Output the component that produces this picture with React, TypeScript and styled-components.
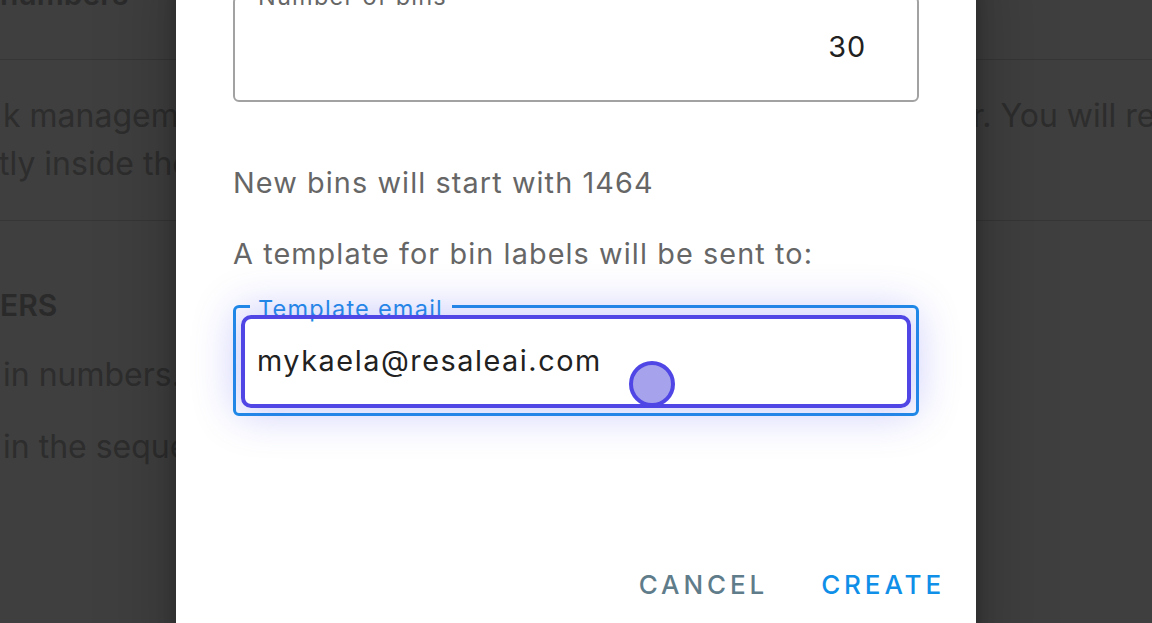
import { PropsWithChildren } from "react";
import styled, { createGlobalStyle } from "styled-components";

const GlobalStyle = createGlobalStyle`
  html, body {
    margin: 0;
    padding: 0;
    overflow: hidden;
  }
  body {
    font-family: Inter, "Noto Sans", sans-serif;
  }
`;

const Screen = styled.div`
  position: relative;
  width: 1152px;
  height: 623px;
  overflow: hidden;
  background: #3f3f3f;
`;

// the page underneath the modal, dimmed
const BehindPage = styled.div`
  height: 100%;
  font-family: Inter, "Noto Sans", sans-serif;
  color: #2d2d2d;
`;

const PageHeading = styled.div`
  margin-top: -24px;
  font-size: 30px;
  line-height: 36px;
  font-weight: 600;
  color: #2b2b2b;
  white-space: nowrap;
`;

const Divider = styled.hr<{ $gap: number }>`
  margin: ${({ $gap }) => $gap}px 0 0;
  border: 0;
  border-top: 1px solid #363636;
`;

const Paragraph = styled.div<{ $gap: number }>`
  margin-top: ${({ $gap }) => $gap}px;
  padding-left: 3px;
  font-size: 32px;
  line-height: 48px;
  white-space: nowrap;
`;

const Line = styled.div<{ $shift?: number }>`
  margin-left: ${({ $shift }) => $shift ?? 0}px;
`;

const SubHeading = styled.div`
  margin-top: 62px;
  margin-left: -3px;
  font-size: 30px;
  line-height: 45px;
  font-weight: 600;
  color: #2a2a2a;
  white-space: nowrap;
`;

const Overlay = styled.div`
  position: absolute;
  inset: 0;
  display: flex;
  justify-content: center;
  align-items: flex-start;
`;

const Dialog = styled.div`
  box-sizing: border-box;
  width: 800px;
  height: 720px;
  margin-top: -40px;
  padding-top: 36px;
  background: #fff;
  box-shadow: 0 0 16px rgba(0, 0, 0, 0.25), 0 0 70px 8px rgba(0, 0, 0, 0.22);
  display: flex;
  flex-direction: column;
`;

const Content = styled.div`
  padding: 0 57px;
  display: flex;
  flex-direction: column;
`;

const Outlined = styled.div<{ $focused?: boolean; $height: number }>`
  position: relative;
  box-sizing: border-box;
  height: ${({ $height }) => $height}px;
  border: ${({ $focused }) => ($focused ? "3px solid #1a8be6" : "2px solid #a2a2a2")};
  border-radius: 6px;
  display: flex;
  align-items: center;
`;

const FloatingLabel = styled.span<{ $focused?: boolean }>`
  position: absolute;
  top: ${({ $focused }) => ($focused ? "-11px" : "-13px")};
  left: ${({ $focused }) => ($focused ? "14px" : "15px")};
  padding: 0 9px 0 8px;
  background: #fff;
  font-size: 23.5px;
  line-height: 23.5px;
  letter-spacing: 1.25px;
  color: ${({ $focused }) => ($focused ? "#1a8be6" : "#666")};
  white-space: nowrap;
`;

const InputText = styled.div<{ $align?: "left" | "right" }>`
  flex: 1;
  padding: ${({ $align }) => ($align === "right" ? "0 51px 6px 0" : "0 0 0 21px")};
  text-align: ${({ $align }) => $align ?? "left"};
  font-size: 28.8px;
  letter-spacing: ${({ $align }) => ($align === "right" ? "0.9px" : "1.55px")};
  color: #212121;
`;

const Helper = styled.p<{ $gap: number }>`
  margin: ${({ $gap }) => $gap}px 0 0;
  font-size: 28.8px;
  line-height: 43.2px;
  letter-spacing: 1.1px;
  color: #666;
`;

const FieldGap = styled.div`
  height: 30px;
`;

// click-highlight overlay drawn by the recorder over the focused field
const Highlight = styled.div`
  position: absolute;
  top: 7px;
  left: 5px;
  right: 5px;
  bottom: 5px;
  border: 4px solid #4f46e5;
  border-radius: 10px;
  box-shadow: 0 0 40px 8px rgba(99, 102, 241, 0.3);
  pointer-events: none;
`;

const ClickDot = styled.span`
  position: absolute;
  left: 384px;
  top: 42px;
  box-sizing: border-box;
  width: 46px;
  height: 46px;
  border-radius: 50%;
  border: 4px solid #4f46e5;
  background: #a6a3ec;
`;

const Actions = styled.div`
  margin-top: 137px;
  padding-right: 17px;
  display: flex;
  justify-content: flex-end;
  gap: 25px;
`;

const TextButton = styled.button<{ $primary?: boolean }>`
  border: 0;
  background: none;
  padding: 9px 14px;
  font-family: Inter, "Noto Sans", sans-serif;
  font-size: 26px;
  line-height: 46px;
  font-weight: 500;
  letter-spacing: 3.9px;
  text-transform: uppercase;
  color: ${({ $primary }) => ($primary ? "#0f8fe8" : "#5f7c8a")};
  cursor: pointer;
`;

const Field = ({
  label,
  focused,
  height,
  children,
}: PropsWithChildren<{ label: string; focused?: boolean; height: number }>) => (
  <Outlined $focused={focused} $height={height}>
    <FloatingLabel $focused={focused}>{label}</FloatingLabel>
    {children}
  </Outlined>
);

const App = () => {
  return (
    <>
      <GlobalStyle />
      <Screen>
        <BehindPage>
          <PageHeading>numbers</PageHeading>
          <Divider $gap={47} />
          <Paragraph $gap={32}>
            <Line>
              k management simple. Each bin has a number set by its manager.
              You will receive labels
            </Line>
            <Line $shift={-4}>tly inside the bins you create.</Line>
          </Paragraph>
          <Divider $gap={32} />
          <Paragraph $gap={0}>
            <SubHeading>ERS</SubHeading>
          </Paragraph>
          <Paragraph $gap={23}>in numbers.</Paragraph>
          <Paragraph $gap={24}>in the sequence shown above.</Paragraph>
        </BehindPage>

        <Overlay>
          <Dialog>
            <Content>
              <Field label="Number of bins" height={106}>
                <InputText $align="right">30</InputText>
              </Field>
              <Helper $gap={59}>New bins will start with 1464</Helper>
              <Helper $gap={28}>A template for bin labels will be sent to:</Helper>
              <FieldGap />
              <Field label="Template email" focused height={111}>
                <InputText>mykaela@resaleai.com</InputText>
                <Highlight>
                  <ClickDot />
                </Highlight>
              </Field>
            </Content>
            <Actions>
              <TextButton>Cancel</TextButton>
              <TextButton $primary>Create</TextButton>
            </Actions>
          </Dialog>
        </Overlay>
      </Screen>
    </>
  );
};

export default App;
